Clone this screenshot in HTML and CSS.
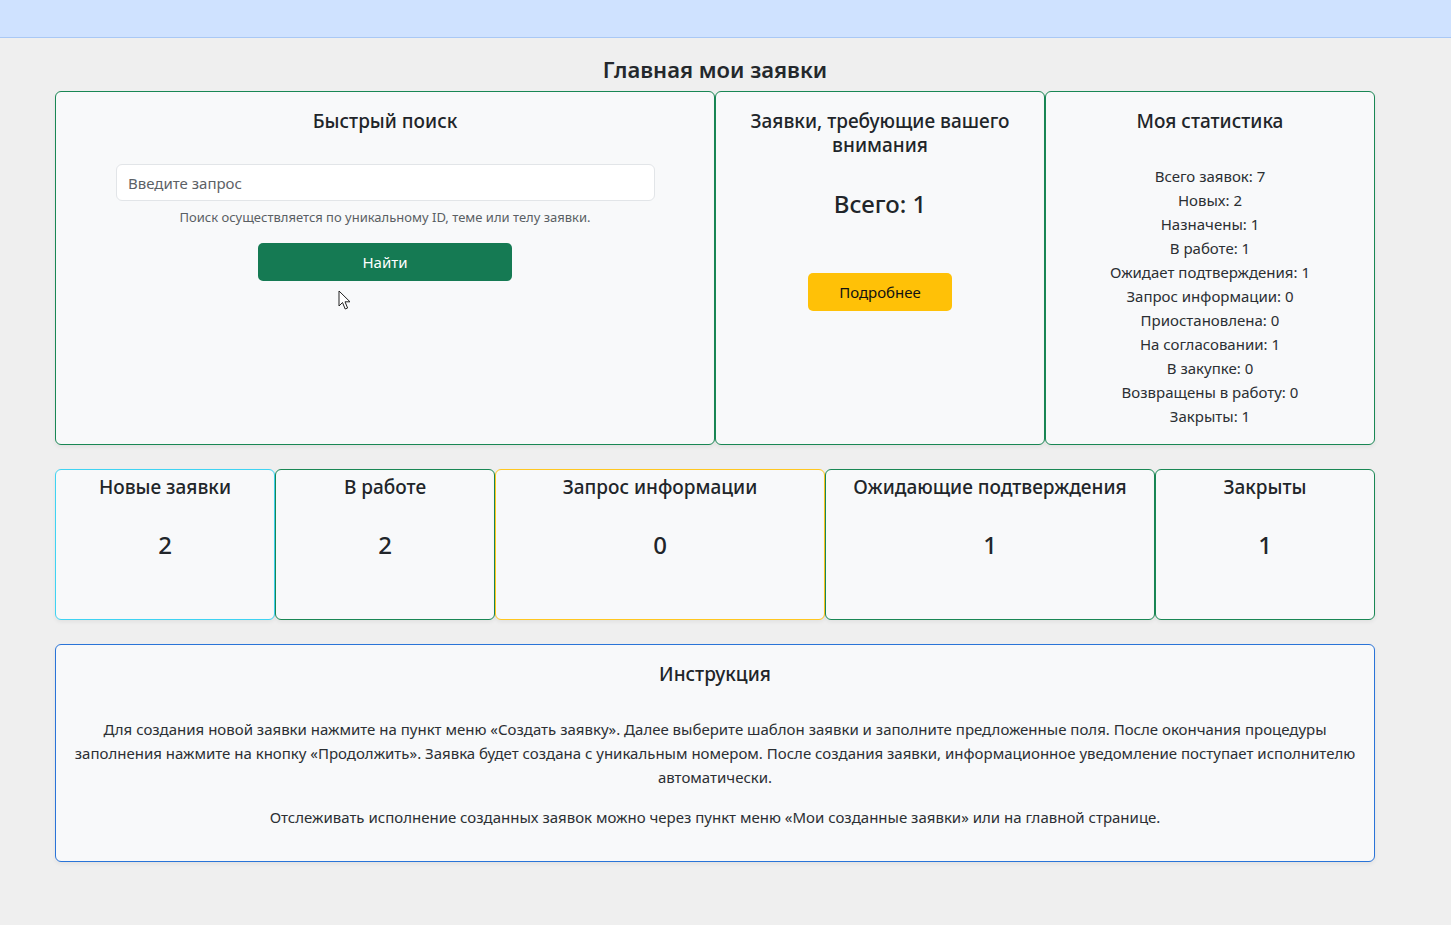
FILE: index.html
```html
<!DOCTYPE html>
<html lang="ru">
<head>
<meta charset="utf-8">
<title>Главная мои заявки</title>
<link rel="stylesheet" href="styles.css">
</head>
<body>
<header class="topbar"></header>
<main class="page">
  <h1 class="page-title">Главная мои заявки</h1>

  <section class="row row-top">
    <div class="card card-search col-6">
      <h5 class="card-title">Быстрый поиск</h5>
      <div class="search-form">
        <input class="search-input" type="text" placeholder="Введите запрос">
        <div class="help">Поиск осуществляется по уникальному ID, теме или телу заявки.</div>
        <button class="btn btn-green">Найти</button>
      </div>
      <svg class="cursor" width="14" height="21" viewBox="0 0 14 21"><path d="M1 1 L1 16 L4.5 12.5 L7.2 19 L9.6 18 L7 11.8 L12 11.8 Z" fill="#fff" stroke="#222" stroke-width="1" stroke-linejoin="round"/></svg>
    </div>
    <div class="card col-3">
      <h5 class="card-title">Заявки, требующие вашего внимания</h5>
      <div class="total">Всего: 1</div>
      <button class="btn btn-yellow">Подробнее</button>
    </div>
    <div class="card col-3">
      <h5 class="card-title">Моя статистика</h5>
      <ul class="stats">
        <li>Всего заявок: 7</li>
        <li>Новых: 2</li>
        <li>Назначены: 1</li>
        <li>В работе: 1</li>
        <li>Ожидает подтверждения: 1</li>
        <li>Запрос информации: 0</li>
        <li>Приостановлена: 0</li>
        <li>На согласовании: 1</li>
        <li>В закупке: 0</li>
        <li>Возвращены в работу: 0</li>
        <li>Закрыты: 1</li>
      </ul>
    </div>
  </section>

  <section class="row row-counts">
    <div class="card count-card col-2 b-info"><h5 class="card-title">Новые заявки</h5><div class="count">2</div></div>
    <div class="card count-card col-2"><h5 class="card-title">В работе</h5><div class="count">2</div></div>
    <div class="card count-card col-3 b-warning"><h5 class="card-title">Запрос информации</h5><div class="count">0</div></div>
    <div class="card count-card col-3"><h5 class="card-title">Ожидающие подтверждения</h5><div class="count">1</div></div>
    <div class="card count-card col-2"><h5 class="card-title">Закрыты</h5><div class="count">1</div></div>
  </section>

  <section class="card card-instr b-primary">
    <h5 class="card-title">Инструкция</h5>
    <p>Для создания новой заявки нажмите на пункт меню «Создать заявку». Далее выберите шаблон заявки и заполните предложенные поля. После окончания процедуры заполнения нажмите на кнопку «Продолжить». Заявка будет создана с уникальным номером. После создания заявки, информационное уведомление поступает исполнителю автоматически.</p>
    <p>Отслеживать исполнение созданных заявок можно через пункт меню «Мои созданные заявки» или на главной странице.</p>
  </section>
</main>
</body>
</html>
```
FILE: styles.css
```css
* { box-sizing: border-box; }
html, body { margin: 0; padding: 0; }
body {
  background: #efefef;
  font-family: "Noto Sans", "Open Sans", sans-serif;
  font-size: 15px;
  color: #212529;
  min-height: 925px;
}
.topbar {
  height: 38px;
  background: #cfe2ff;
  border-bottom: 1px solid #a9c8f5;
}
.page {
  width: 1320px;
  margin-left: 55px;
}
.page-title {
  margin: 0;
  padding-top: 17px;
  height: 53px;
  text-align: center;
  font-size: 22px;
  line-height: 29px;
  font-weight: 600;
  color: #24282c;
}
.row { display: flex; }
.col-6 { width: 660px; }
.col-3 { width: 330px; }
.col-2 { width: 220px; }
.card {
  position: relative;
  background: #f8f9fa;
  border: 1px solid #198754;
  border-radius: 6px;
  box-shadow: 0 2px 4px rgba(0,0,0,0.06);
  text-align: center;
  padding: 17px 16px 16px;
}
.card-title {
  margin: 0;
  font-size: 19px;
  line-height: 24px;
  font-weight: 500;
  color: #212529;
}
.search-form {
  margin-top: 31px;
  display: flex;
  flex-direction: column;
  align-items: center;
}
.search-input {
  width: 539px;
  height: 37px;
  border: 1px solid #e2e5e8;
  border-radius: 6px;
  background: #fff;
  padding: 0 11px;
  font: inherit;
  font-size: 15px;
  color: #212529;
  margin-left: 1px;
}
.search-input::placeholder { color: #5c6166; }
.help {
  margin-top: 6px;
  font-size: 13px;
  line-height: 20px;
  color: #5a5f64;
}
.btn {
  border: none;
  border-radius: 5px;
  font: inherit;
  font-size: 15px;
  height: 38px;
  cursor: pointer;
}
.btn-green {
  margin-top: 16px;
  width: 254px;
  background: #157a53;
  color: #fff;
}
.btn-yellow {
  margin-top: 55px;
  width: 144px;
  background: #ffc107;
  color: #111;
}
.total {
  margin-top: 32px;
  font-size: 24px;
  line-height: 29px;
  font-weight: 500;
}
.cursor {
  position: absolute;
  left: 282px;
  top: 198px;
}
.stats {
  list-style: none;
  margin: 31px 0 0;
  padding: 0;
  font-size: 15px;
  line-height: 24px;
  color: #2b2f33;
}
.row-counts { margin-top: 24px; }
.count-card {
  height: 151px;
  padding-top: 5px;
}
.count {
  margin-top: 31px;
  font-size: 24px;
  line-height: 29px;
  font-weight: 500;
}
.b-info { border-color: #3fd3f2; }
.b-warning { border-color: #ffc720; }
.b-primary { border-color: #2a74d8; }
.card-instr {
  margin-top: 24px;
  padding: 17px 13px 16px;
}
.card-instr p {
  margin: 0 0 16px;
  line-height: 24px;
  font-size: 15px;
  color: #2b2f33;
}
.card-instr .card-title { margin-bottom: 31px; }
```
